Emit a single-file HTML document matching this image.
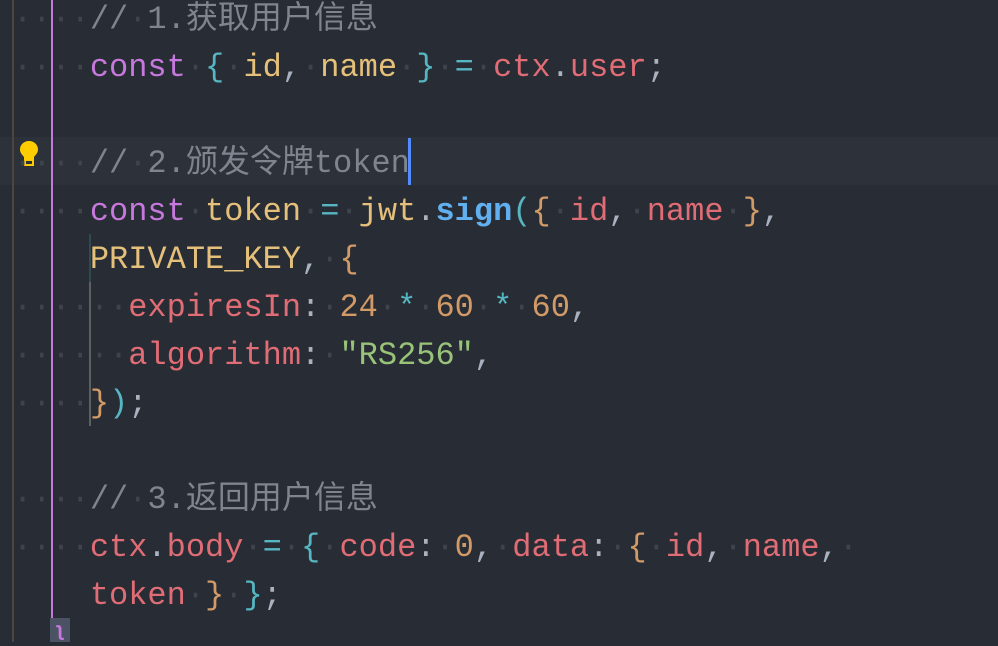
<!DOCTYPE html>
<html><head><meta charset="utf-8"><style>
html,body{margin:0;padding:0;width:998px;height:642px;overflow:hidden;background:#282c34;}
.code{position:absolute;left:13px;top:-4px;font-family:"Liberation Mono","Noto Sans CJK SC",monospace;font-size:32px;color:#abb2bf;}
.l{height:48px;line-height:48px;white-space:pre;overflow:hidden;}
.d{color:#3e434c;}
.c{color:#7f848e}.k{color:#c678dd}.y{color:#e5c07b}.r{color:#e06c75}.cy{color:#56b6c2}.b{color:#61afef;font-weight:bold}.o{color:#d19a66}.g{color:#98c379}.p{color:#abb2bf}
</style></head><body>
<div style="position:absolute;left:0;top:137px;width:998px;height:48px;background:#2c313a"></div>
<div style="position:absolute;left:12px;top:0;width:2px;height:642px;background:#4f4440"></div>
<div style="position:absolute;left:51px;top:0;width:2px;height:618px;background:#c678dd"></div>
<div style="position:absolute;left:50px;top:618px;width:20px;height:24px;background:#4b5263;color:#c678dd;font:bold 20px 'Liberation Mono',monospace;line-height:28px;text-align:center">ʅ</div>
<div style="position:absolute;left:89px;top:234px;width:2px;height:48px;background:#2f4a50"></div>
<div style="position:absolute;left:89px;top:282px;width:2px;height:144px;background:#5a6160"></div>
<div style="position:absolute;left:408px;top:138px;width:3px;height:47px;background:#528bff"></div>
<svg style="position:absolute;left:18px;top:140px" width="22" height="26" viewBox="0 0 22 26"><path d="M11 1C5.5 1 2 5 2 9.5c0 3.5 2.5 5.5 4 7.5v3h10v-3c1.5-2 4-4 4-7.5C20 5 16.5 1 11 1z" fill="#ffcc00"/><rect x="7" y="20" width="8" height="5" fill="none" stroke="#ffcc00" stroke-width="2"/></svg>
<div class="code"><div class="l"><span class="d">····</span><span class="c">//<span class="d">·</span>1.获取用户信息</span></div><div class="l"><span class="d">····</span><span class="k">const</span><span class="d">·</span><span class="cy">{</span><span class="d">·</span><span class="y">id</span>,<span class="d">·</span><span class="y">name</span><span class="d">·</span><span class="cy">}</span><span class="d">·</span><span class="cy">=</span><span class="d">·</span><span class="r">ctx</span>.<span class="r">user</span>;</div><div class="l"> </div><div class="l"><span class="d">····</span><span class="c">//<span class="d">·</span>2.颁发令牌token</span></div><div class="l"><span class="d">····</span><span class="k">const</span><span class="d">·</span><span class="y">token</span><span class="d">·</span><span class="cy">=</span><span class="d">·</span><span class="y">jwt</span>.<span class="b">sign</span><span class="cy">(</span><span class="o">{</span><span class="d">·</span><span class="r">id</span>,<span class="d">·</span><span class="r">name</span><span class="d">·</span><span class="o">}</span>,</div><div class="l">    <span class="y">PRIVATE_KEY</span>,<span class="d">·</span><span class="o">{</span></div><div class="l"><span class="d">······</span><span class="r">expiresIn</span>:<span class="d">·</span><span class="o">24</span><span class="d">·</span><span class="cy">*</span><span class="d">·</span><span class="o">60</span><span class="d">·</span><span class="cy">*</span><span class="d">·</span><span class="o">60</span>,</div><div class="l"><span class="d">······</span><span class="r">algorithm</span>:<span class="d">·</span><span class="g">"RS256"</span>,</div><div class="l"><span class="d">····</span><span class="o">}</span><span class="cy">)</span>;</div><div class="l"> </div><div class="l"><span class="d">····</span><span class="c">//<span class="d">·</span>3.返回用户信息</span></div><div class="l"><span class="d">····</span><span class="r">ctx</span>.<span class="r">body</span><span class="d">·</span><span class="cy">=</span><span class="d">·</span><span class="cy">{</span><span class="d">·</span><span class="r">code</span>:<span class="d">·</span><span class="o">0</span>,<span class="d">·</span><span class="r">data</span>:<span class="d">·</span><span class="o">{</span><span class="d">·</span><span class="r">id</span>,<span class="d">·</span><span class="r">name</span>,<span class="d">·</span></div><div class="l">    <span class="r">token</span><span class="d">·</span><span class="o">}</span><span class="d">·</span><span class="cy">}</span>;</div></div>
</body></html>
